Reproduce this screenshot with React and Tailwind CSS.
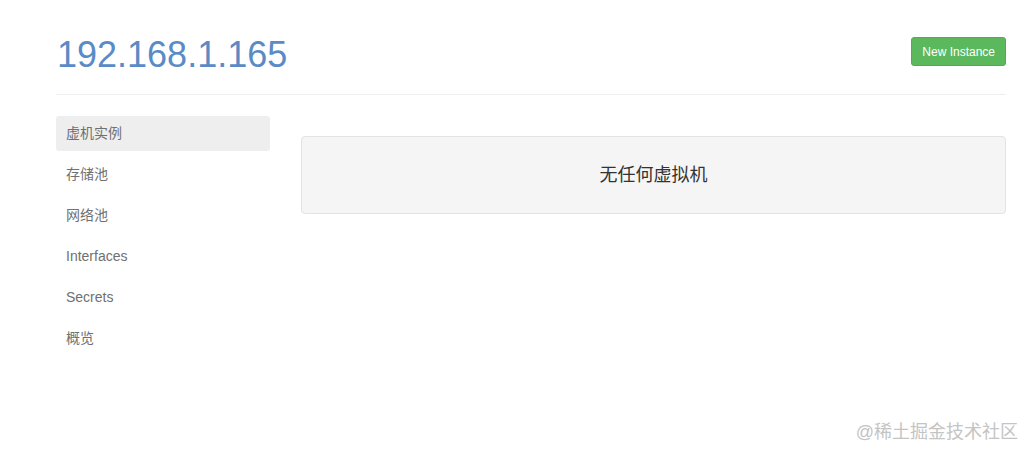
export default function App() {
  const items = ["虚机实例", "存储池", "网络池", "Interfaces", "Secrets", "概览"];
  return (
    <div className="relative w-[1034px] h-[457px] bg-white" style={{ fontFamily: '"Liberation Sans", Arial, "Noto Sans CJK SC", sans-serif' }}>
      <div className="mx-[56px] w-[950px]">
        <div className="flex items-start justify-between pt-[36px] pb-[20px] border-b border-[#eeeeee]">
          <h1 className="text-[36px] leading-[38px] text-[#5a8bc6] ml-[1px]">192.168.1.165</h1>
          <button className="mt-[1px] h-[29px] px-[10px] rounded-[3px] bg-[#5cb85c] border border-[#4cae4c] text-white text-[12px] leading-none">New Instance</button>
        </div>
        <div className="flex pt-[21px]">
          <ul className="w-[214px] flex flex-col gap-[6px]">
            {items.map((t, i) => (
              <li key={t} className={`h-[35px] flex items-center pl-[10px] text-[14px] text-[#707070] rounded-[3px] ${i === 0 ? "bg-[#eeeeee]" : ""}`}>{t}</li>
            ))}
          </ul>
          <div className="ml-[31px] flex-1 mt-[20px] self-start h-[78px] bg-[#f5f5f5] border border-[#e3e3e3] rounded-[4px] flex items-center justify-center text-[18px] text-[#333333]">
            无任何虚拟机
          </div>
        </div>
      </div>
      <div className="absolute right-[16px] top-[419px] text-[18px] text-[#c4c4c4]">@稀土掘金技术社区</div>
    </div>
  );
}
